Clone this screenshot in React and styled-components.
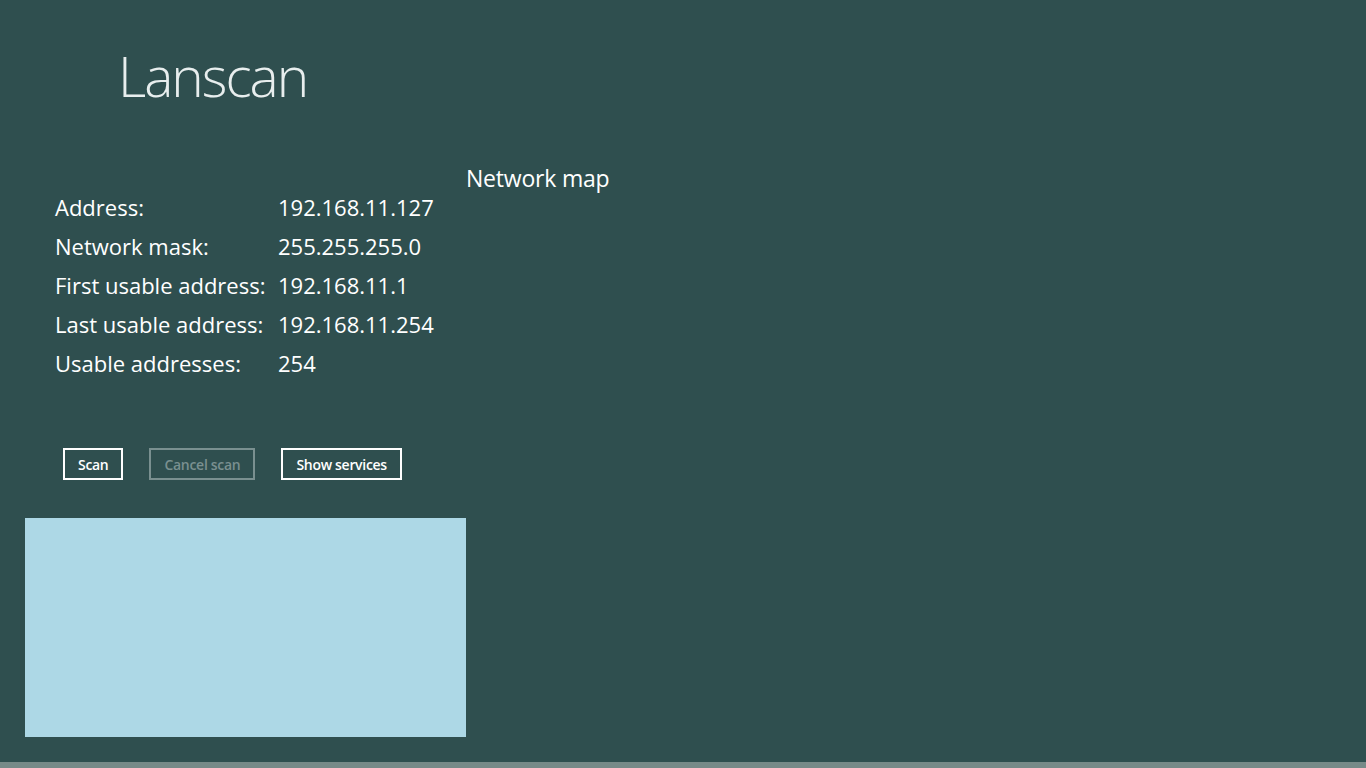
import React from "react";
import styled, { createGlobalStyle } from "styled-components";

const GlobalStyle = createGlobalStyle`
  html, body {
    margin: 0;
    padding: 0;
    background: #2f4f4f;
    overflow: hidden;
  }
  body {
    font-family: "Open Sans", "Noto Sans", sans-serif;
    color: #ffffff;
  }
`;

const Page = styled.div`
  height: 768px;
  display: flex;
  flex-direction: column;
  background: #2f4f4f;
`;

const Content = styled.div`
  flex: 1;
`;

const Title = styled.h1`
  margin: 0;
  padding: 38px 0 0 118px;
  font-size: 55px;
  font-weight: 300;
  line-height: 76px;
  color: #e8eeee;
  letter-spacing: -2px;
`;

const Body = styled.div`
  display: flex;
  margin-top: 52px;
  padding-left: 25px;
`;

const LeftPanel = styled.div`
  width: 441px;
  display: flex;
  flex-direction: column;
`;

const InfoTable = styled.div`
  display: grid;
  grid-template-columns: 223px auto;
  grid-auto-rows: 39px;
  align-items: center;
  margin: 21px 0 0 30px;
  font-size: 22px;
`;

const Cell = styled.div`
  white-space: nowrap;
`;

const ButtonRow = styled.div`
  display: flex;
  gap: 26px;
  margin: 66px 0 0 38px;
`;

const Button = styled.button`
  height: 32px;
  padding: 0 13px;
  background: transparent;
  border: 2px solid ${(p) => (p.disabled ? "#7a9090" : "#ffffff")};
  color: ${(p) => (p.disabled ? "#7a9090" : "#ffffff")};
  font-family: "Open Sans", "Noto Sans", sans-serif;
  font-size: 14px;
  font-weight: 600;
  letter-spacing: -0.3px;
`;

const ResultBox = styled.div`
  margin-top: 38px;
  height: 219px;
  background: #add8e6;
`;

const MapPanel = styled.div`
  flex: 1;
`;

const MapHeading = styled.h2`
  margin: -4px 0 0;
  font-size: 23px;
  font-weight: 400;
  line-height: 32px;
  letter-spacing: -0.2px;
`;

const BottomBar = styled.div`
  height: 6px;
  background: #778a88;
`;

const rows = [
  ["Address:", "192.168.11.127"],
  ["Network mask:", "255.255.255.0"],
  ["First usable address:", "192.168.11.1"],
  ["Last usable address:", "192.168.11.254"],
  ["Usable addresses:", "254"],
];

export default function App() {
  return (
    <Page>
      <GlobalStyle />
      <Content>
        <Title>Lanscan</Title>
        <Body>
          <LeftPanel>
            <InfoTable>
              {rows.map(([label, value]) => (
                <React.Fragment key={label}>
                  <Cell>{label}</Cell>
                  <Cell>{value}</Cell>
                </React.Fragment>
              ))}
            </InfoTable>
            <ButtonRow>
              <Button>Scan</Button>
              <Button disabled>Cancel scan</Button>
              <Button>Show services</Button>
            </ButtonRow>
            <ResultBox />
          </LeftPanel>
          <MapPanel>
            <MapHeading>Network map</MapHeading>
          </MapPanel>
        </Body>
      </Content>
      <BottomBar />
    </Page>
  );
}
